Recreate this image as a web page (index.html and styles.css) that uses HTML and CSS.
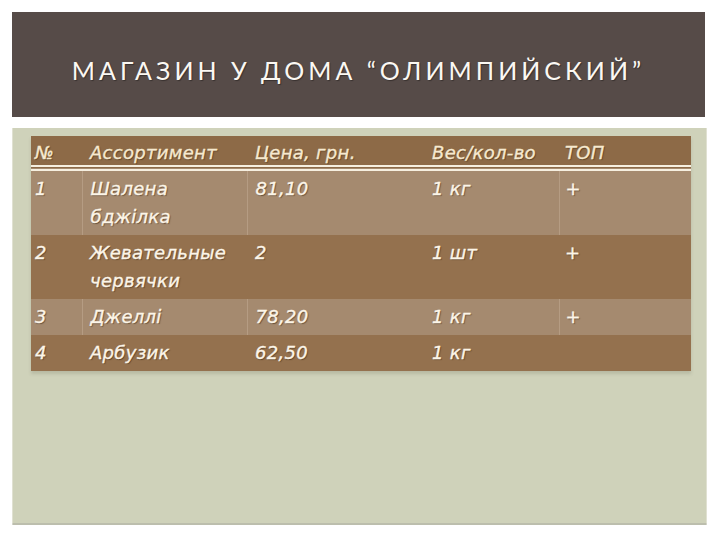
FILE: index.html
```html
<!DOCTYPE html>
<html lang="ru">
<head>
<meta charset="utf-8">
<title>Магазин у дома “Олимпийский”</title>
<link rel="stylesheet" href="styles.css">
</head>
<body>
<div class="slide">
  <header class="title-bar">
    <h1 class="title">МАГАЗИН У ДОМА “ОЛИМПИЙСКИЙ”</h1>
  </header>
  <section class="content">
    <table class="goods">
      <colgroup>
        <col class="c1"><col class="c2"><col class="c3"><col class="c4"><col class="c5">
      </colgroup>
      <thead>
        <tr>
          <th class="first">№</th>
          <th>Ассортимент</th>
          <th>Цена, грн.</th>
          <th>Вес/кол-во</th>
          <th class="last">ТОП</th>
        </tr>
      </thead>
      <tbody>
        <tr class="light tall">
          <td class="first">1</td>
          <td class="div">Шалена бджілка</td>
          <td class="div">81,10</td>
          <td>1 кг</td>
          <td class="div last">+</td>
        </tr>
        <tr class="dark tall">
          <td class="first">2</td>
          <td>Жевательные червячки</td>
          <td>2</td>
          <td>1 шт</td>
          <td class="last">+</td>
        </tr>
        <tr class="light">
          <td class="first">3</td>
          <td class="div">Джеллі</td>
          <td class="div">78,20</td>
          <td>1 кг</td>
          <td class="div last">+</td>
        </tr>
        <tr class="dark">
          <td class="first">4</td>
          <td>Арбузик</td>
          <td>62,50</td>
          <td>1 кг</td>
          <td class="last"></td>
        </tr>
      </tbody>
    </table>
  </section>
</div>
</body>
</html>
```

FILE: styles.css
```css
html, body {
  margin: 0;
  padding: 0;
  background: #ffffff;
}

.slide {
  width: 720px;
  height: 540px;
  padding: 12px 0 0 12px;
  box-sizing: border-box;
  display: flex;
  flex-direction: column;
}

.title-bar {
  width: 693px;
  height: 105px;
  background: #564b48;
  display: flex;
  align-items: center;
  justify-content: center;
  box-sizing: border-box;
  padding-top: 10px;
}

.title {
  margin: 0;
  font-family: "Lato", "Liberation Sans", sans-serif;
  font-weight: 400;
  font-size: 25px;
  letter-spacing: 4px;
  color: #fbf8f3;
  text-shadow: 1px 1px 1px rgba(0, 0, 0, 0.35);
}

.content {
  margin-top: 11px;
  width: 695px;
  height: 397px;
  background: #cfd2ba;
  box-sizing: border-box;
  padding: 8px 0 0 19px;
  box-shadow: inset 13px 0 0 -12px rgba(255, 255, 255, 0.35),
              inset -4px 0 0 -3px rgba(255, 255, 255, 0.35),
              inset 0 -4px 0 -2px rgba(170, 170, 160, 0.5);
}

.goods {
  width: 660px;
  table-layout: fixed;
  border-collapse: collapse;
  font-family: "DejaVu Sans", "Verdana", sans-serif;
  font-style: italic;
  font-size: 18px;
  letter-spacing: 0.3px;
  color: #fcf5e8;
  -webkit-text-stroke: 0.35px #fcf5e8;
  text-shadow: 1px 1px 1px rgba(60, 40, 20, 0.6);
  box-shadow: 0 3px 3px rgba(120, 120, 100, 0.25);
}

.c1 { width: 51px; }
.c2 { width: 165px; }
.c3 { width: 177px; }
.c4 { width: 135px; }
.c5 { width: 132px; }

.goods th {
  font-weight: 400;
  text-align: left;
  height: 29px;
  padding: 5px 0 0 8px;
  box-sizing: border-box;
  line-height: 24px;
  background: #8d6a47;
  color: #f6e9cf;
  -webkit-text-stroke: 0.35px #f6e9cf;
  border-bottom: 6px double #f6efe0;
  white-space: nowrap;
}

.goods td {
  text-align: left;
  vertical-align: top;
  padding: 4px 6px 4px 8px;
  line-height: 28px;
}

.goods .first {
  padding-left: 4px;
}

.goods .last {
  padding-left: 6px;
}

.light td {
  background: #a58a6f;
}

.dark td {
  background: #94714e;
}

.light td.div {
  border-left: 1px solid rgba(255, 240, 220, 0.18);
}
```
